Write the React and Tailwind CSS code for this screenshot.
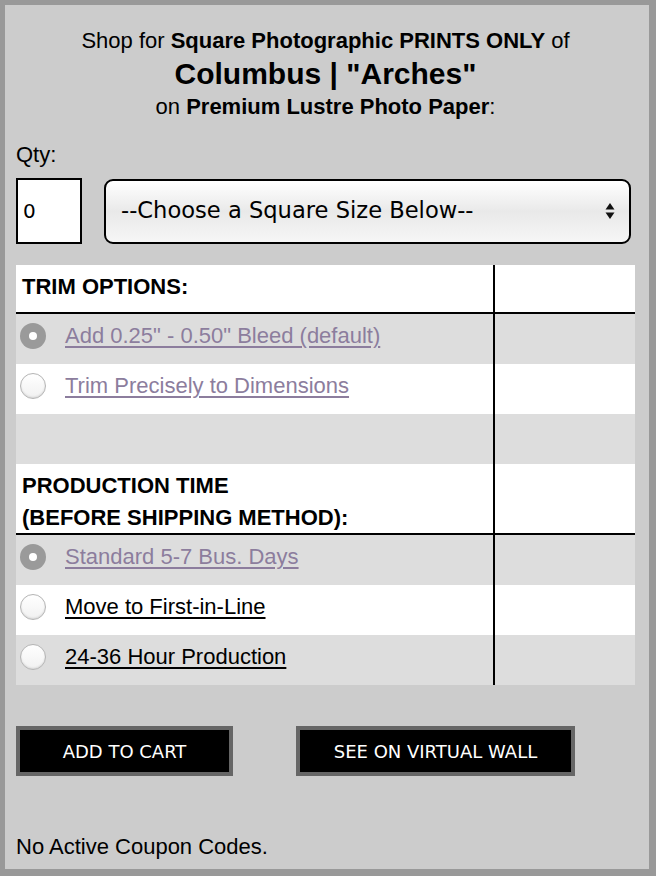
import React, { useState } from 'react';

function Radio({ checked }) {
    if (checked) {
        return (
            <span className="w-[26px] h-[26px] rounded-full bg-[#9a9a9a] flex items-center justify-center shrink-0">
                <span className="w-[8px] h-[8px] rounded-full bg-white" />
            </span>
        );
    }
    return (
        <span className="w-[26px] h-[26px] rounded-full bg-gradient-to-b from-white to-[#f1f1f1] border border-[#b5b5b5] shadow-[inset_0_-1px_2px_rgba(0,0,0,0.12)] shrink-0" />
    );
}

function OptionRow({ label, checked, shade, muted }) {
    return (
        <div className={`flex h-[50px] ${shade ? 'bg-[#dddddd]' : 'bg-white'}`}>
            <div className="w-[477px] flex items-center gap-[19px] pl-[4px] pb-[6px]">
                <Radio checked={checked} />
                <a
                    href="#"
                    className={`text-[22px] leading-[26px] underline underline-offset-[3px] ${muted ? 'text-[#8c7d9d]' : 'text-black'}`}
                >
                    {label}
                </a>
            </div>
            <div className="flex-1 border-l-2 border-black" />
        </div>
    );
}

function HeaderRow({ children, tall }) {
    return (
        <div className={`flex bg-white border-b-2 border-black ${tall ? 'h-[71px]' : 'h-[49px]'}`}>
            <div
                className={`w-[477px] flex pl-[6px] text-[22px] font-bold leading-[32px] text-black ${tall ? 'items-start pt-[6px]' : 'items-center pb-[4px]'}`}
            >
                {children}
            </div>
            <div className="flex-1 border-l-2 border-black" />
        </div>
    );
}

export default function App() {
    const [qty, setQty] = useState('0');

    return (
        <div className="w-[656px] h-[876px] bg-[#cccccc] border-[#999999] border-t-[5px] border-l-[5px] border-r-[7px] border-b-[7px] font-['Liberation_Sans',Arial,sans-serif] text-black">
            <div className="pl-[11px] pr-[14px]">
                {/* Heading */}
                <div className="text-center pt-[21px]">
                    <div className="text-[22px] leading-[30px]">
                        Shop for <b>Square Photographic PRINTS ONLY</b> of
                    </div>
                    <div className="text-[30px] leading-[36px] font-bold">Columbus | "Arches"</div>
                    <div className="text-[22px] leading-[30px]">
                        on <b>Premium Lustre Photo Paper</b>:
                    </div>
                </div>

                {/* Qty + size */}
                <div className="text-[22px] leading-[26px] mt-[20px]">Qty:</div>
                <div className="flex items-center gap-[22px] mt-[10px]">
                    <input
                        value={qty}
                        onChange={(e) => setQty(e.target.value)}
                        className="w-[66px] h-[66px] border-2 border-black bg-white px-[5px] text-[20px] font-['DejaVu_Sans',Verdana,sans-serif] outline-none"
                    />
                    <div className="w-[527px] h-[65px] rounded-[9px] border-2 border-black bg-gradient-to-b from-white via-[#e9e9e9] to-[#f6f6f6] flex items-center justify-between pl-[15px] pr-[14px] font-['DejaVu_Sans',Verdana,sans-serif] text-[22.6px]">
                        <span>--Choose a Square Size Below--</span>
                        <svg width="10" height="18" viewBox="0 0 10 18">
                            <path d="M5 1 L9.5 7.5 L0.5 7.5 Z" fill="#111" />
                            <path d="M5 17 L9.5 10.5 L0.5 10.5 Z" fill="#111" />
                        </svg>
                    </div>
                </div>

                {/* Options table */}
                <div className="mt-[21px] w-[619px]">
                    <HeaderRow>TRIM OPTIONS:</HeaderRow>
                    <OptionRow label={'Add 0.25" - 0.50" Bleed (default)'} checked shade muted />
                    <OptionRow label="Trim Precisely to Dimensions" muted />
                    <div className="flex h-[50px] bg-[#dddddd]">
                        <div className="w-[477px]" />
                        <div className="flex-1 border-l-2 border-black" />
                    </div>
                    <HeaderRow tall>
                        <span>
                            PRODUCTION TIME
                            <br />
                            (BEFORE SHIPPING METHOD):
                        </span>
                    </HeaderRow>
                    <OptionRow label="Standard 5-7 Bus. Days" checked shade muted />
                    <OptionRow label="Move to First-in-Line" />
                    <OptionRow label="24-36 Hour Production" shade />
                </div>

                {/* Buttons */}
                <div className="flex gap-[63px] mt-[41px] font-['DejaVu_Sans',Verdana,sans-serif] text-[18px] text-white">
                    <button className="w-[217px] h-[50px] bg-black border-4 border-[#666666]">ADD TO CART</button>
                    <button className="w-[279px] h-[50px] bg-black border-4 border-[#666666]">SEE ON VIRTUAL WALL</button>
                </div>

                <div className="text-[22px] leading-[26px] mt-[58px]">No Active Coupon Codes.</div>
            </div>
        </div>
    );
}
